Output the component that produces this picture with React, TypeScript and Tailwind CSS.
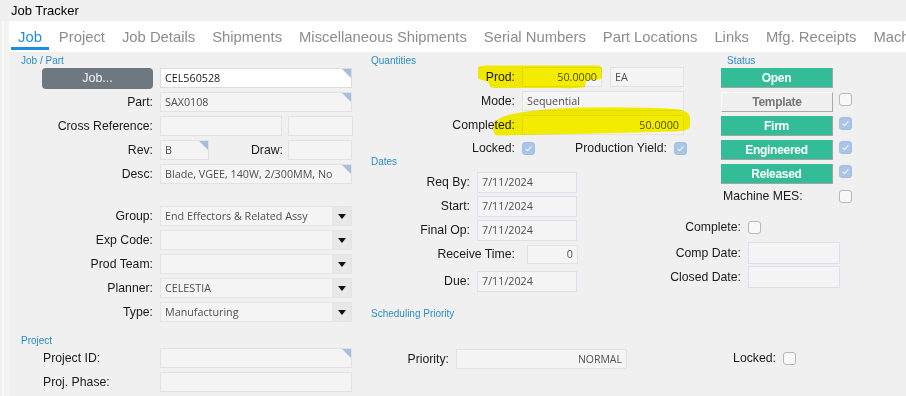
import React from "react";

const LBL = "text-[12.25px] text-[#1a1a1a] leading-none whitespace-nowrap";
const SEC = "text-[10px] leading-[12px] text-[#2a8ec4] whitespace-nowrap";

function Corner() {
  return (
    <span className="absolute top-0 right-0 w-0 h-0 border-t-[9px] border-l-[9px] border-t-[#a9bedd] border-l-transparent" />
  );
}

function Field({
  className = "",
  value = "",
  right = false,
  corner = false,
  white = false,
  lav = false,
  dark = false,
  small = false,
}: {
  className?: string;
  value?: string;
  right?: boolean;
  corner?: boolean;
  white?: boolean;
  lav?: boolean;
  dark?: boolean;
  small?: boolean;
}) {
  return (
    <div
      className={`relative flex items-center px-[4px] border ${
        white ? "bg-white border-[#dcdcdc]" : lav ? "bg-[#f4f4f4] border-[#dfdfec]" : "bg-[#f4f4f4] border-[#e2e2e2]"
      } ${right ? "justify-end" : "justify-start"} font-['Open_Sans',sans-serif] ${
        small ? "text-[10.5px]" : "text-[10.75px]"
      } ${dark ? "text-[#1a1a1a]" : "text-[#505050]"} leading-none whitespace-nowrap overflow-hidden ${className}`}
    >
      {value}
      {corner && <Corner />}
    </div>
  );
}

function Drop({ value = "" }: { value?: string }) {
  return (
    <div className="relative flex items-center w-[192px] h-[20px] bg-[#f4f4f4] border border-[#e4e4e4] font-['Open_Sans',sans-serif] text-[10.75px] text-[#505050] leading-none whitespace-nowrap">
      <span className="flex-1 pl-[4px]">{value}</span>
      <span className="w-[19px] h-full bg-[#e8e8e8] flex items-center justify-center">
        <svg width="8" height="5" viewBox="0 0 8 5">
          <path d="M0 0 H8 L4 5 Z" fill="#111" />
        </svg>
      </span>
    </div>
  );
}

function Check({ checked = false }: { checked?: boolean }) {
  return checked ? (
    <span className="w-[13px] h-[13px] rounded-[3px] bg-[#a9c5e6] border border-[#a3bfe2] flex items-center justify-center shrink-0">
      <svg width="9" height="9" viewBox="0 0 9 9">
        <path d="M1.6 4.8 L3.6 6.6 L7.4 2.4" stroke="#eef4fb" strokeWidth="1.1" fill="none" />
      </svg>
    </span>
  ) : (
    <span className="block w-[13px] h-[13px] rounded-[3px] bg-[#f8f8f8] border border-[#b8b8b8] shrink-0" />
  );
}

function Row({ label, children, className = "" }: { label: string; children: React.ReactNode; className?: string }) {
  return (
    <div className={`flex items-center h-[20px] ${className}`}>
      <span className={`${LBL} w-[144px] text-right mr-[7px]`}>{label}</span>
      {children}
    </div>
  );
}

function StatusBtn({ label, green = true }: { label: string; green?: boolean }) {
  return (
    <div
      className={`w-[112px] h-[20px] flex items-center justify-center font-bold text-[12px] tracking-[-0.3px] leading-none ${
        green
          ? "bg-[#32bd98] text-white border-r border-b border-[#a3a3a3]"
          : "bg-[#f0f0f0] text-[#777] border-r border-b border-[#a8a8a8] border-l border-t border-l-[#fbfbfb] border-t-[#fbfbfb]"
      }`}
    >
      {label}
    </div>
  );
}

function StatusRow({ label, green = true, check }: { label: string; green?: boolean; check?: "on" | "off" }) {
  return (
    <div className="flex items-start h-[20px]">
      <StatusBtn label={label} green={green} />
      {check && (
        <div className="ml-[6px] mt-[1px] flex">
          <Check checked={check === "on"} />
        </div>
      )}
    </div>
  );
}

const tabs = [
  "Job",
  "Project",
  "Job Details",
  "Shipments",
  "Miscellaneous Shipments",
  "Serial Numbers",
  "Part Locations",
  "Links",
  "Mfg. Receipts",
  "Machine MES",
];

export default function App() {
  return (
    <div className="relative w-[906px] h-[396px] bg-[#f0f0f0] overflow-hidden flex flex-col font-['Liberation_Sans',Arial,sans-serif]">
      <div className="h-[21px] pl-[11px] text-[13px] leading-[21px] text-black">Job Tracker</div>
      <div className="flex-1 flex">
        <div className="w-[9px] flex">
          <div className="w-[2px]" />
          <div className="w-[2px] bg-[#f9f9f9]" />
          <div className="flex-1 bg-[#f3f3f3]" />
        </div>
        <div className="flex-1 flex flex-col min-w-0">
          <div className="h-[31px] bg-white flex pl-[2px] gap-[3px] overflow-hidden">
            {tabs.map((t, i) => (
              <div
                key={t}
                className={`relative h-full px-[7px] flex items-center pt-[2px] whitespace-nowrap text-[14.8px] leading-none ${
                  i === 0 ? "text-[#1b8de0]" : "text-[#8c8c8c]"
                }`}
              >
                {t}
                {i === 0 && <span className="absolute left-0 right-0 bottom-[2px] h-[3px] bg-[#1b8de0]" />}
              </div>
            ))}
          </div>
          <div className="flex-1 flex">
            {/* Left column */}
            <div className="w-[351px] flex flex-col">
              <div className={`${SEC} pl-[12px] pt-[3px]`}>Job / Part</div>
              <div className="mt-[1px] flex flex-col gap-[4px]">
                <div className="flex items-center h-[20px]">
                  <div className="ml-[33px] w-[111px] h-[21px] rounded-[4px] bg-[#6d7880] text-[#f4f4f4] flex items-center justify-center text-[12.5px] leading-none">
                    Job...
                  </div>
                  <Field className="ml-[7px] w-[192px] h-[20px]" white dark corner value="CEL560528" />
                </div>
                <Row label="Part:">
                  <Field className="w-[192px] h-[20px]" corner value="SAX0108" />
                </Row>
                <Row label="Cross Reference:">
                  <Field className="w-[122px] h-[20px]" />
                  <Field className="ml-[6px] w-[65px] h-[20px]" />
                </Row>
                <Row label="Rev:">
                  <Field className="w-[49px] h-[20px]" corner value="B" />
                  <span className={`${LBL} w-[74px] text-right mr-[5px]`}>Draw:</span>
                  <Field className="w-[64px] h-[20px]" />
                </Row>
                <Row label="Desc:">
                  <Field className="w-[192px] h-[20px]" corner value="Blade, VGEE, 140W, 2/300MM, No" />
                </Row>
              </div>
              <div className="mt-[22px] flex flex-col gap-[4px]">
                <Row label="Group:">
                  <Drop value="End Effectors & Related Assy" />
                </Row>
                <Row label="Exp Code:">
                  <Drop />
                </Row>
                <Row label="Prod Team:">
                  <Drop />
                </Row>
                <Row label="Planner:">
                  <Drop value="CELESTIA" />
                </Row>
                <Row label="Type:">
                  <Drop value="Manufacturing" />
                </Row>
              </div>
              <div className={`${SEC} pl-[12px] mt-[13px]`}>Project</div>
              <div className="mt-[1px] flex flex-col gap-[4px]">
                <div className="flex items-center h-[20px] pl-[34px]">
                  <span className={`${LBL} w-[117px]`}>Project ID:</span>
                  <Field className="w-[192px] h-[20px]" corner />
                </div>
                <div className="flex items-center h-[20px] pl-[34px]">
                  <span className={`${LBL} w-[117px]`}>Proj. Phase:</span>
                  <Field className="w-[192px] h-[20px]" />
                </div>
              </div>
            </div>

            {/* Middle column */}
            <div className="w-[340px] flex flex-col">
              <div className={`${SEC} pl-[11px] pt-[3px]`}>Quantities</div>
              <div className="flex items-center h-[20px]">
                <span className={`${LBL} w-[155px] text-right mr-[7px]`}>Prod:</span>
                <Field className="w-[80px] h-[20px]" right value="50.0000" />
                <Field className="ml-[8px] w-[74px] h-[20px]" value="EA" />
              </div>
              <div className="mt-[4px] flex items-center h-[20px]">
                <span className={`${LBL} w-[155px] text-right mr-[7px]`}>Mode:</span>
                <Field className="w-[162px] h-[20px]" value="Sequential" />
              </div>
              <div className="mt-[4px] flex items-center h-[20px]">
                <span className={`${LBL} w-[155px] text-right mr-[7px]`}>Completed:</span>
                <Field className="w-[162px] h-[20px]" right value="50.0000" />
              </div>
              <div className="mt-[5px] flex items-center h-[16px]">
                <span className={`${LBL} w-[155px] text-right mr-[7px]`}>Locked:</span>
                <Check checked />
                <span className={`${LBL} w-[132px] text-right mr-[7px]`}>Production Yield:</span>
                <Check checked />
              </div>
              <div className={`${SEC} pl-[11px]`}>Dates</div>
              <div className="mt-[4px] flex items-center h-[21px]">
                <span className={`${LBL} w-[110px] text-right mr-[7px]`}>Req By:</span>
                <Field className="w-[100px] h-[21px]" lav value="7/11/2024" />
              </div>
              <div className="mt-[3px] flex items-center h-[21px]">
                <span className={`${LBL} w-[110px] text-right mr-[7px]`}>Start:</span>
                <Field className="w-[100px] h-[21px]" lav value="7/11/2024" />
              </div>
              <div className="mt-[3px] flex items-center h-[21px]">
                <span className={`${LBL} w-[110px] text-right mr-[7px]`}>Final Op:</span>
                <Field className="w-[100px] h-[21px]" lav value="7/11/2024" />
              </div>
              <div className="mt-[4px] flex items-center h-[19px]">
                <span className={`${LBL} w-[155px] text-right mr-[12px]`}>Receive Time:</span>
                <Field className="w-[51px] h-[19px]" right value="0" />
              </div>
              <div className="mt-[7px] flex items-center h-[21px]">
                <span className={`${LBL} w-[110px] text-right mr-[7px]`}>Due:</span>
                <Field className="w-[100px] h-[21px]" lav value="7/11/2024" />
              </div>
              <div className={`${SEC} pl-[11px] mt-[16px]`}>Scheduling Priority</div>
              <div className="mt-[29px] flex items-center h-[20px]">
                <span className={`${LBL} w-[89px] text-right mr-[7px]`}>Priority:</span>
                <Field className="w-[171px] h-[20px]" right small value="NORMAL" />
              </div>
            </div>

            {/* Right column */}
            <div className="flex-1 flex flex-col">
              <div className={`${SEC} pl-[27px] pt-[3px]`}>Status</div>
              <div className="mt-[1px] flex flex-col gap-[4px] pl-[21px]">
                <StatusRow label="Open" />
                <StatusRow label="Template" green={false} check="off" />
                <StatusRow label="Firm" check="on" />
                <StatusRow label="Engineered" check="on" />
                <StatusRow label="Released" check="on" />
              </div>
              <div className="mt-[4px] flex items-center h-[16px] pl-[23px]">
                <span className={`${LBL} w-[116px]`}>Machine MES:</span>
                <Check />
              </div>
              <div className="-ml-[40px] flex flex-col">
                <div className="mt-[15px] flex items-center h-[16px]">
                  <span className={`${LBL} w-[81px] text-right mr-[7px]`}>Complete:</span>
                  <Check />
                </div>
                <div className="mt-[7px] flex items-center h-[22px]">
                  <span className={`${LBL} w-[81px] text-right mr-[7px]`}>Comp Date:</span>
                  <Field className="w-[92px] h-[22px]" lav />
                </div>
                <div className="mt-[2px] flex items-center h-[22px]">
                  <span className={`${LBL} w-[81px] text-right mr-[7px]`}>Closed Date:</span>
                  <Field className="w-[92px] h-[22px]" lav />
                </div>
              </div>
              <div className="mt-[62px] flex items-center h-[16px]">
                <span className={`${LBL} w-[76px] text-right mr-[7px]`}>Locked:</span>
                <Check />
              </div>
            </div>
          </div>
        </div>
      </div>

      {/* yellow highlighter strokes */}
      <svg className="absolute inset-0 pointer-events-none mix-blend-multiply" width="906" height="396" viewBox="0 0 906 396">
        <path
          d="M478 67 Q480 65 490 65.5 L598 65.5 Q602 66 602 70 L602 78 Q600 80 590 80 L586 81 L585 87 Q580 88.5 560 88 L494 88 Q489 87.5 489 84 L488 81 Q480 80.5 478 78 Z"
          fill="#fff700"
        />
        <path
          d="M494 124 Q497 117 512 114 Q540 108.5 580 107.5 Q640 106.5 676 109 Q690 111 690 118 L690 127 Q688 131 676 131.5 Q600 133.5 520 135 L498 135.5 Q493 135 493.5 130 Z"
          fill="#fff700"
        />
      </svg>
    </div>
  );
}
